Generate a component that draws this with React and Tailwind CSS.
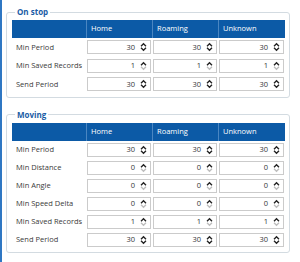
import React from "react";

const Spin = ({ down = true }) => (
  <svg width="7" height="10" viewBox="0 0 7 10" className="shrink-0">
    <path d="M1 4.2 L3.5 1.7 L6 4.2" fill="none" stroke="#1f1f1f" strokeWidth="1.3" />
    <path d="M1 5.8 L3.5 8.3 L6 5.8" fill="none" stroke={down ? "#1f1f1f" : "#bdbdbd"} strokeWidth="1.3" />
  </svg>
);

const Cell = ({ v }) => (
  <div className="px-[1px] flex items-center">
    <div className="w-full h-[14px] border border-[#cbcbcb] bg-white flex items-center justify-end pr-[3px] gap-[5px] text-[#333]">
      <span className="leading-none">{v}</span>
      <Spin down={v > 1} />
    </div>
  </div>
);

const cols = "grid grid-cols-[74px_66px_66px_67px]";

const Group = ({ title, rows, rowH }) => (
  <fieldset className="w-[284px] border border-[#d3dbe1] rounded-[3px] pl-[5px] pr-[4px] pb-[3px]">
    <legend className="ml-[3px] px-[2px] text-[#1a5ca5] font-bold text-[8px] leading-[12px]">{title}</legend>
    <div className={`${cols} mt-[2px] h-[18px] bg-[#0c5aa6] text-white items-center`}>
      <div></div>
      <div className="h-full flex items-center pl-[4px] border-l border-[#4a86c2]">Home</div>
      <div className="h-full flex items-center pl-[4px] border-l border-[#4a86c2]">Roaming</div>
      <div className="h-full flex items-center pl-[4px] border-l border-[#4a86c2]">Unknown</div>
    </div>
    {rows.map(([label, a, b, c]) => (
      <div key={label} className={`${cols} ${rowH}`}>
        <div className="flex items-center pl-[4px] text-[#3a3a3a]">{label}</div>
        <Cell v={a} />
        <Cell v={b} />
        <Cell v={c} />
      </div>
    ))}
  </fieldset>
);

export default function App() {
  return (
    <div
      className="w-[300px] h-[262px] bg-white flex text-[7.5px] overflow-hidden"
      style={{ fontFamily: '"Open Sans", "Noto Sans", sans-serif' }}
    >
      <div className="w-[1.5px] h-full bg-[#2f77c3] shrink-0"></div>
      <div className="pl-[4.5px] pt-[6px] flex flex-col gap-[11px]">
        <Group
          title="On stop"
          rowH="h-[18.5px]"
          rows={[
            ["Min Period", 30, 30, 30],
            ["Min Saved Records", 1, 1, 1],
            ["Send Period", 30, 30, 30],
          ]}
        />
        <Group
          title="Moving"
          rowH="h-[18px]"
          rows={[
            ["Min Period", 30, 30, 30],
            ["Min Distance", 0, 0, 0],
            ["Min Angle", 0, 0, 0],
            ["Min Speed Delta", 0, 0, 0],
            ["Min Saved Records", 1, 1, 1],
            ["Send Period", 30, 30, 30],
          ]}
        />
      </div>
    </div>
  );
}
